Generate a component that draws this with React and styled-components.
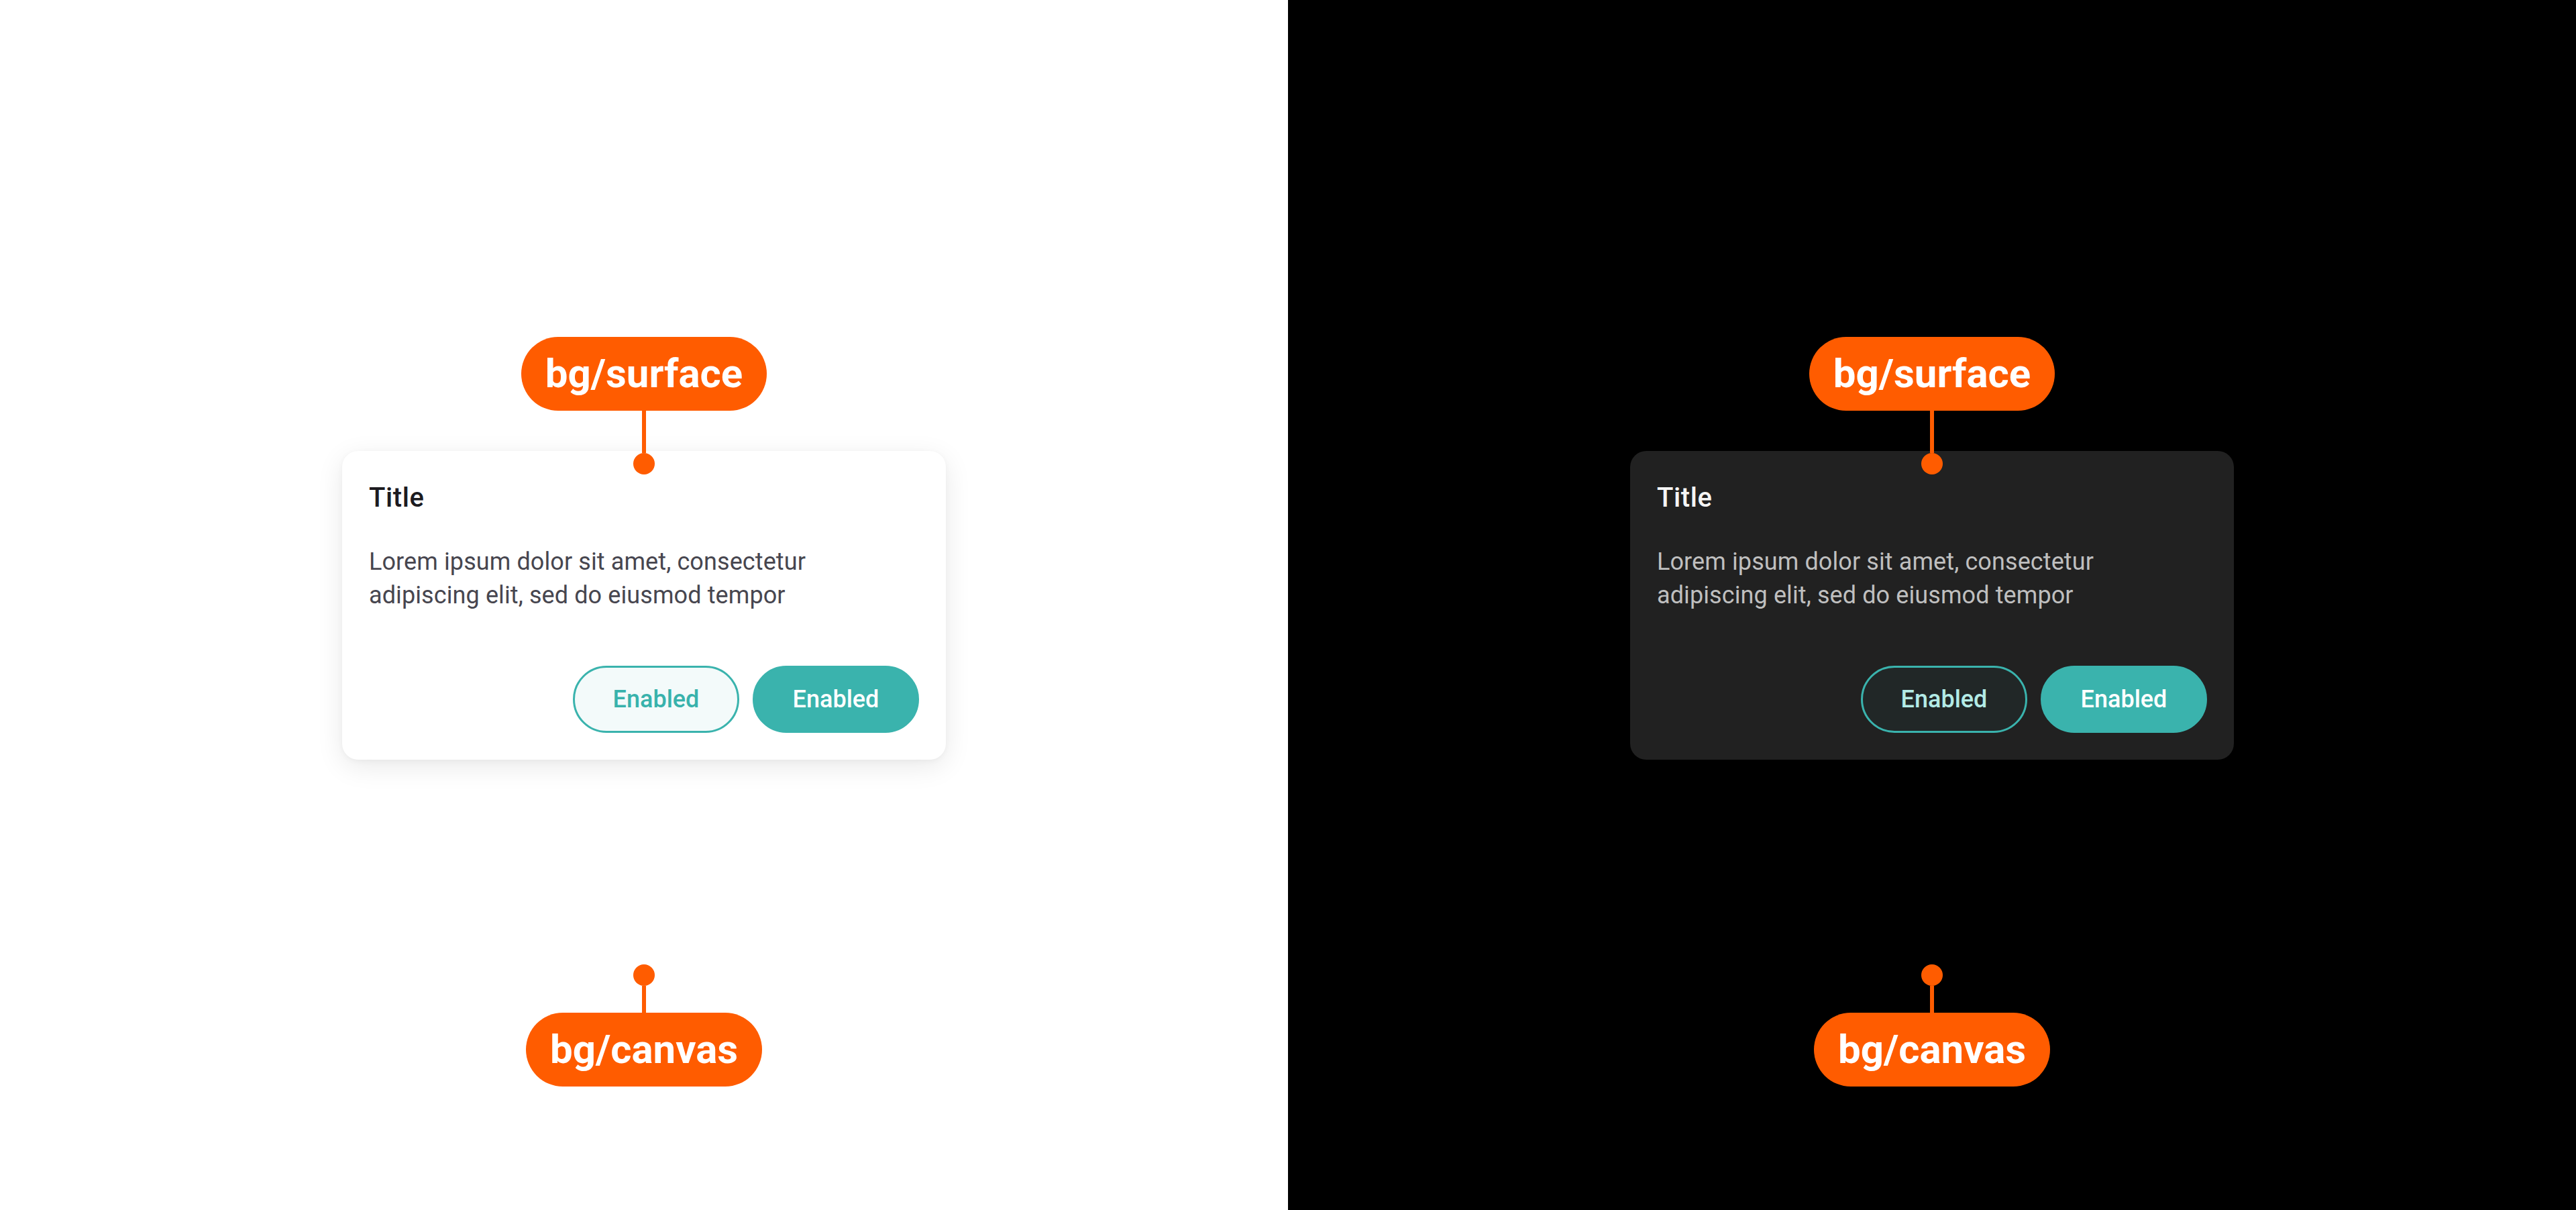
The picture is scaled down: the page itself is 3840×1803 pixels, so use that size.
import styled, { createGlobalStyle } from 'styled-components'

const GlobalStyle = createGlobalStyle`
  html, body {
    margin: 0;
    padding: 0;
  }
  body {
    font-family: Roboto, 'Liberation Sans', sans-serif;
  }
`

const themes = {
  light: {
    canvas: '#ffffff',
    surface: '#ffffff',
    title: '#1c1b1f',
    body: '#47464f',
    outlineBg: '#f3fafa',
    outlineText: '#38b2ac',
    shadow: '0 10px 40px rgba(0, 0, 0, 0.09), 0 2px 8px rgba(0, 0, 0, 0.04)',
  },
  dark: {
    canvas: '#000000',
    surface: '#212121',
    title: '#f5f5f5',
    body: '#bfbfbf',
    outlineBg: '#212727',
    outlineText: '#b3ebe6',
    shadow: 'none',
  },
}

const ACCENT = '#ff5c00'
const TEAL = '#3ab3ad'

const Page = styled.div`
  display: grid;
  grid-template-columns: 1fr 1fr;
  width: 3840px;
  height: 1803px;
`

const Panel = styled.section`
  display: flex;
  flex-direction: column;
  align-items: center;
  padding-top: 502px;
  background: ${(p) => p.$t.canvas};
`

// label + stem + dot pointing at a token
const Callout = styled.div`
  position: relative;
  z-index: 1;
  display: flex;
  flex-direction: column;
  align-items: center;
`

const Tag = styled.div`
  height: 110px;
  padding: 0 36px;
  border-radius: 55px;
  background: ${ACCENT};
  color: #ffffff;
  font-size: 60px;
  font-weight: 700;
  line-height: 110px;
  white-space: nowrap;
`

const Stem = styled.div`
  width: 6px;
  height: ${(p) => p.$h}px;
  background: ${ACCENT};
`

const Dot = styled.div`
  width: 32px;
  height: 32px;
  border-radius: 50%;
  background: ${ACCENT};
`

const Card = styled.div`
  display: flex;
  flex-direction: column;
  box-sizing: border-box;
  width: 900px;
  height: 460px;
  margin-top: -35px;
  padding: 40px;
  border-radius: 24px;
  background: ${(p) => p.$t.surface};
  box-shadow: ${(p) => p.$t.shadow};
`

const Title = styled.h2`
  margin: 0;
  font-size: 40px;
  font-weight: 500;
  line-height: 60px;
  letter-spacing: 0.6px;
  color: ${(p) => p.$t.title};
`

const Body = styled.p`
  margin: 40px 0 0;
  font-size: 36px;
  line-height: 50px;
  letter-spacing: 0.1px;
  color: ${(p) => p.$t.body};
`

const Actions = styled.div`
  display: flex;
  justify-content: flex-end;
  gap: 20px;
  margin-top: auto;
`

const Button = styled.button`
  box-sizing: border-box;
  width: 248px;
  height: 100px;
  border-radius: 50px;
  border: 3px solid ${TEAL};
  background: ${(p) => (p.$filled ? TEAL : p.$t.outlineBg)};
  color: ${(p) => (p.$filled ? '#ffffff' : p.$t.outlineText)};
  font-family: Roboto, 'Liberation Sans', sans-serif;
  font-size: 36px;
  font-weight: 500;
  cursor: pointer;
`

const Spacer = styled.div`
  height: 305px;
`

const Side = ({ t }) => (
  <Panel $t={t}>
    <Callout>
      <Tag>bg/surface</Tag>
      <Stem $h={63} />
      <Dot />
    </Callout>
    <Card $t={t}>
      <Title $t={t}>Title</Title>
      <Body $t={t}>
        Lorem ipsum dolor sit amet, consectetur
        <br />
        adipiscing elit, sed do eiusmod tempor
      </Body>
      <Actions>
        <Button $t={t}>Enabled</Button>
        <Button $t={t} $filled>
          Enabled
        </Button>
      </Actions>
    </Card>
    <Spacer />
    <Callout>
      <Dot />
      <Stem $h={40} />
      <Tag>bg/canvas</Tag>
    </Callout>
  </Panel>
)

export default function App() {
  return (
    <>
      <GlobalStyle />
      <Page>
        <Side t={themes.light} />
        <Side t={themes.dark} />
      </Page>
    </>
  )
}
